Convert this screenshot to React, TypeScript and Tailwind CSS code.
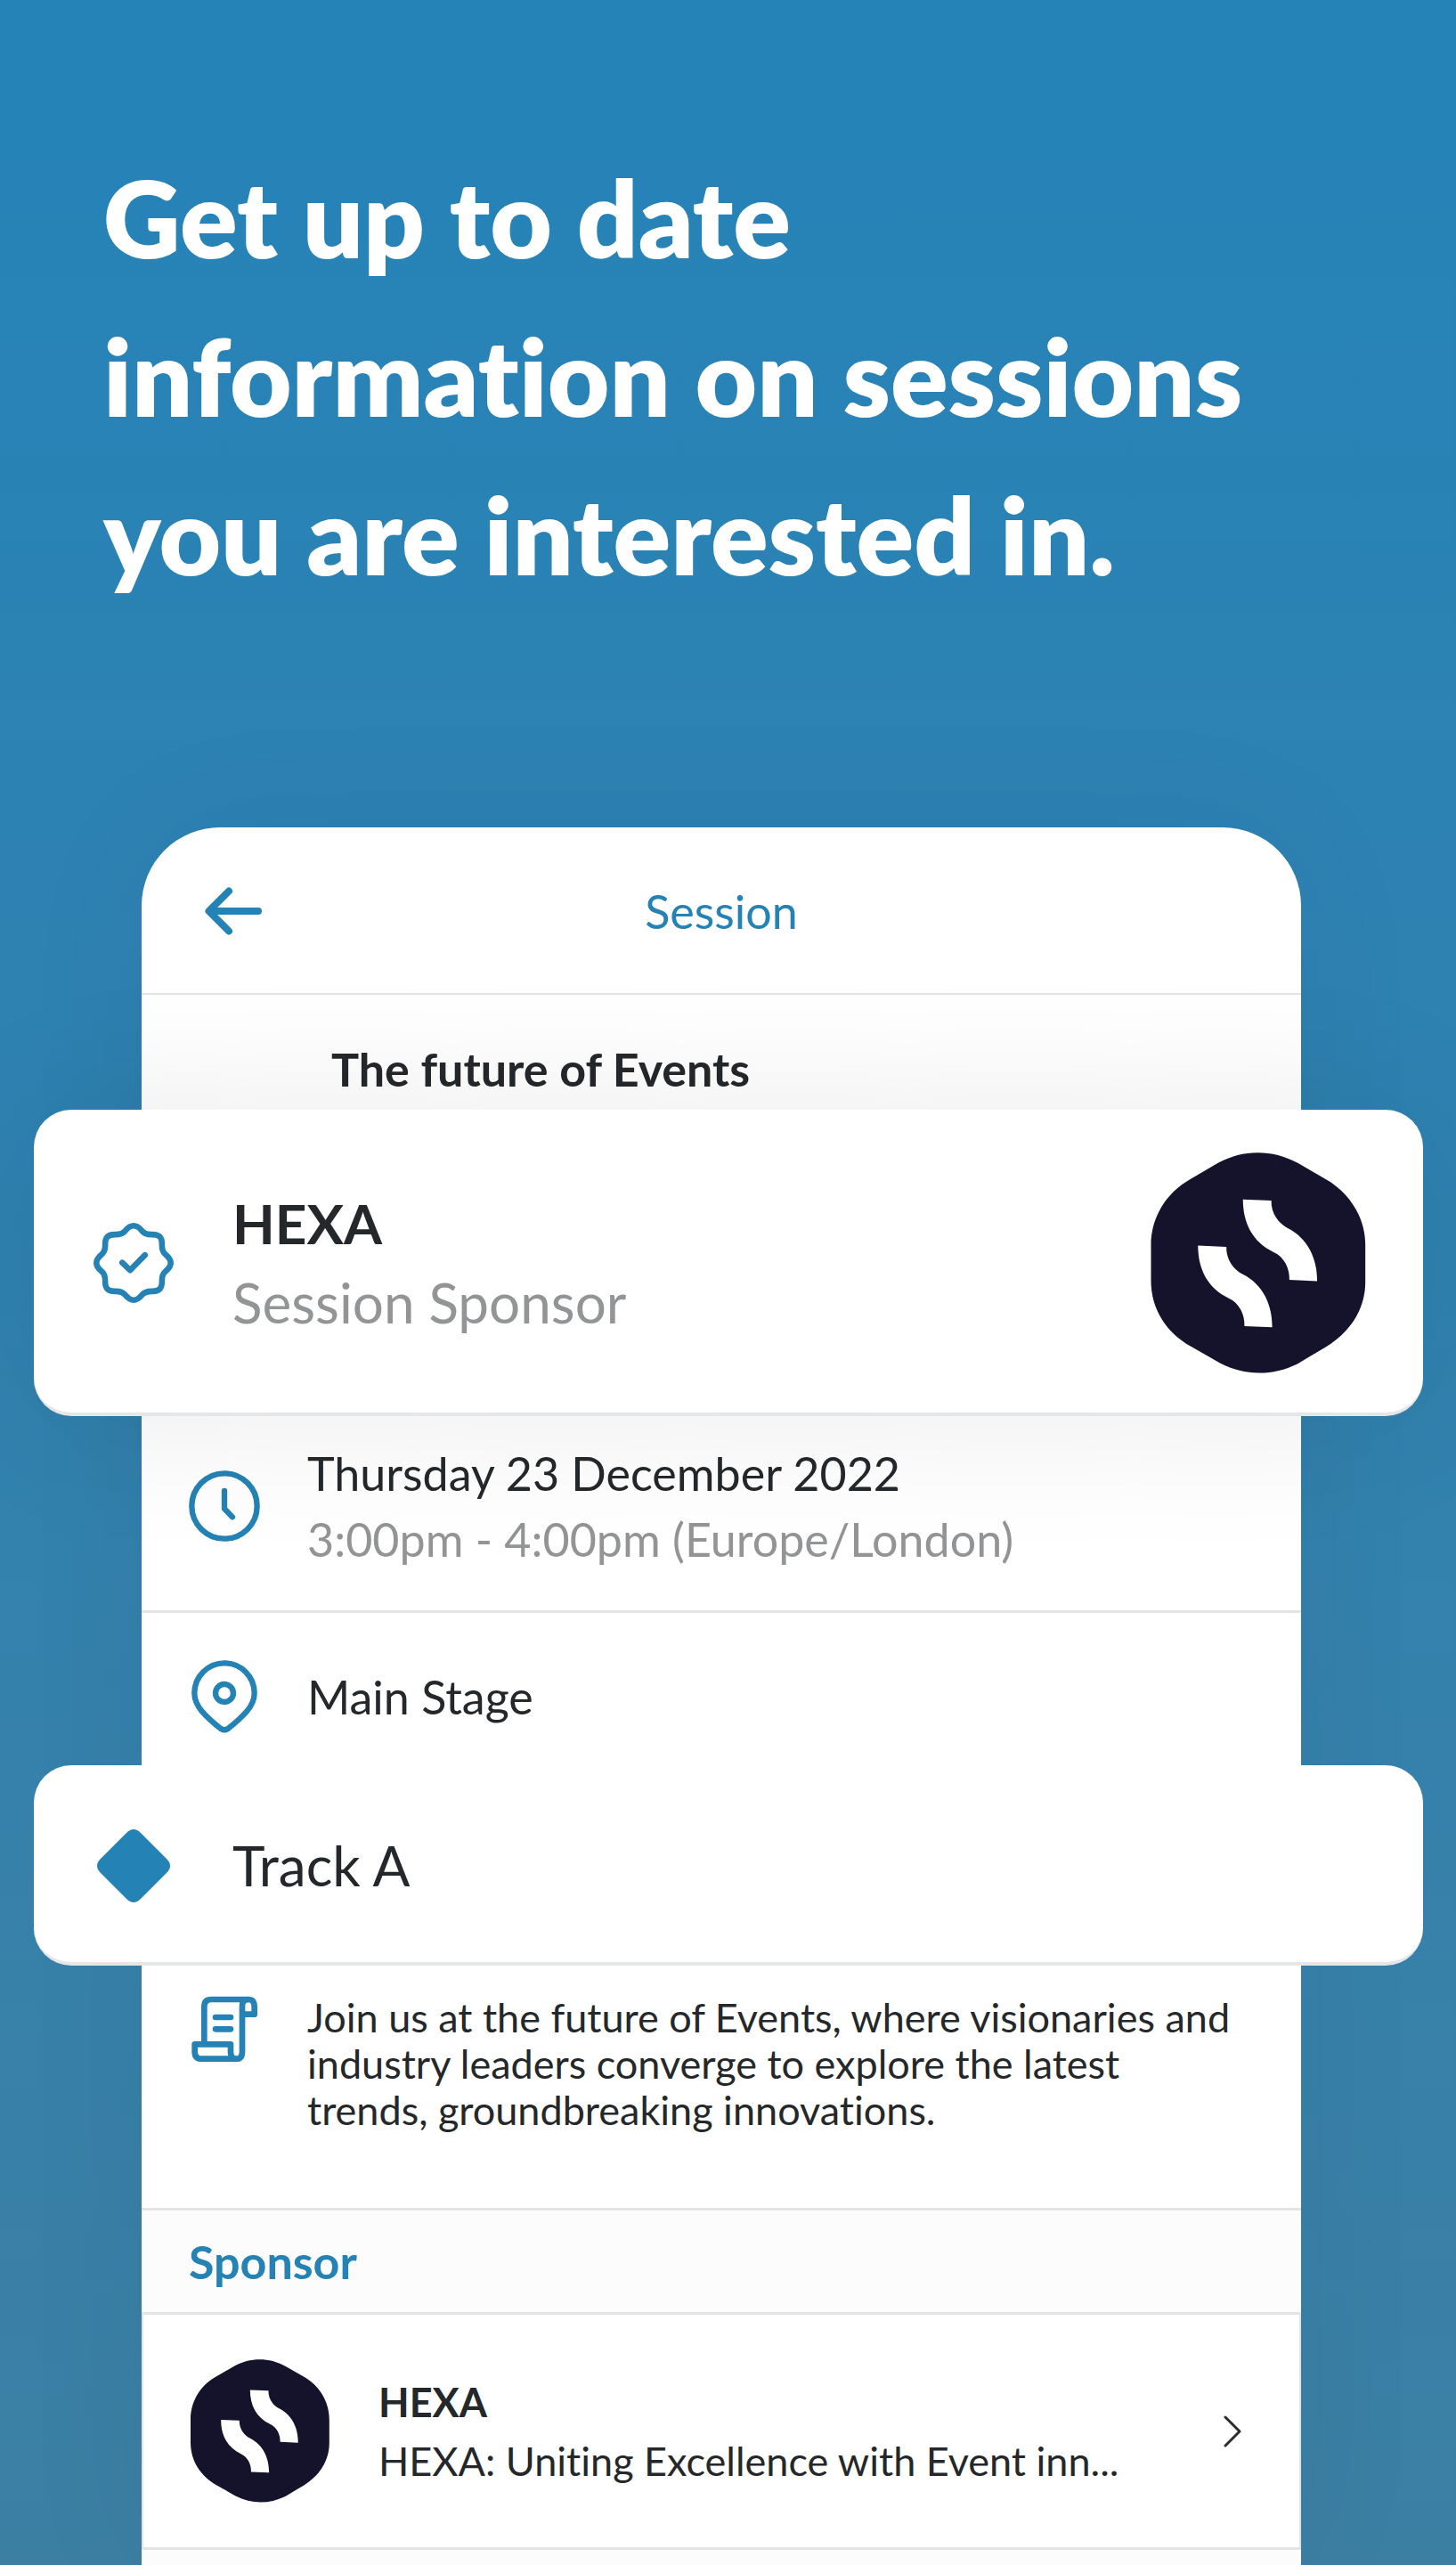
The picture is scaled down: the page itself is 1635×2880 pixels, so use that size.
import type { ReactNode } from 'react';

const BLUE = '#2482b4';

function BackIcon() {
  return (
    <svg className="h-[54px] w-16" viewBox="0 0 64 54" fill="none" stroke={BLUE} strokeWidth="8" strokeLinecap="round" strokeLinejoin="round" aria-hidden="true">
      <path d="M5 27H60M27 4.500L4.500 27L27 49.500" />
    </svg>
  );
}

function BadgeIcon() {
  return (
    <svg className="h-[90px] w-[90px] shrink-0" viewBox="-137 -137 274 274" fill="none" stroke={BLUE} strokeWidth="20" strokeLinecap="round" strokeLinejoin="round" aria-hidden="true">
      <path d="M0-127C15-127 22-117 30-108C38-99 48-97 60-97C85-98 98-90 97-62C97-48 99-38 108-30C117-22 127-15 127 0C127 15 117 22 108 30C99 38 97 48 97 60C98 85 90 98 62 97C48 97 38 99 30 108C22 117 15 127 0 127C-15 127-22 117-30 108C-38 99-48 97-60 97C-85 98-98 90-97 62C-97 48-99 38-108 30C-117 22-127 15-127 0C-127-15-117-22-108-30C-99-38-97-48-97-60C-98-85-90-98-62-97C-48-97-38-99-30-108C-22-117-15-127 0-127Z" />
      <path d="M-39-1L-12 25L39-27" />
    </svg>
  );
}

function ClockIcon() {
  return (
    <svg className="h-20 w-20 shrink-0" viewBox="36 32 240 240" fill="none" stroke={BLUE} strokeWidth="19" strokeLinecap="round" strokeLinejoin="round" aria-hidden="true">
      <circle cx="156" cy="152" r="110" />
      <path d="M156 101V161L183 189" />
    </svg>
  );
}

function PinIcon() {
  return (
    <svg className="h-[82px] w-20 shrink-0" viewBox="36 673 240 246" fill="none" stroke={BLUE} strokeWidth="19" strokeLinejoin="round" aria-hidden="true">
      <path d="M55 784A101 101 0 0 1 257 784C257 808 248 826 232 845C212 868 190 887 168 904Q156 912 144 904C122 887 100 868 80 845C64 826 55 808 55 784Z" />
      <circle cx="156" cy="784" r="30" />
    </svg>
  );
}

function ScrollIcon() {
  return (
    <svg className="h-20 w-20 shrink-0" viewBox="36 42 240 240" fill="none" stroke={BLUE} strokeWidth="20" strokeLinejoin="round" aria-hidden="true">
      <path d="M88 209V84Q88 60 112 60H236Q257 60 257 84V110H218" />
      <path d="M216 110V82Q216 60 236 60M216 80V236Q216 260 196 260Q177 260 177 236V211H56V236Q56 260 80 260H196" />
      <path d="M126 120H177M126 160H177" strokeLinecap="round" />
    </svg>
  );
}

function DiamondIcon() {
  return (
    <svg className="h-[82px] w-[90px] shrink-0" viewBox="-4 0 90 82" fill={BLUE} aria-hidden="true">
      <path d="M33 4Q41-4 49 4L78 33Q86 41 78 49L49 78Q41 86 33 78L4 49Q-4 41 4 33Z" />
    </svg>
  );
}

function HexaLogo({ className }: { className: string }) {
  return (
    <svg className={className} viewBox="157 162 726 747" role="img" aria-label="HEXA">
      <path fill="#14132b" d="M157 595V475C157 385 205 300 290 252L385 197C468 151 568 151 652 197L748 252C832 300 882 385 882 475V600C882 690 832 770 748 820L652 877C568 918 475 918 392 875L292 818C207 770 157 690 157 595Z" />
      <path fill="#fff" d="M468 321L564 325C563 370 590 402 618 417C690 452 720 525 719 597L625 593C627 555 608 515 572 499C500 465 468 400 468 321Z" />
      <path fill="#fff" d="M316 477L412 481C411 526 438 558 466 573C538 608 568 681 567 753L473 749C475 711 456 671 420 655C348 621 316 556 316 477Z" />
    </svg>
  );
}

function ChevronIcon() {
  return (
    <svg className="h-9 w-5 shrink-0" viewBox="0 0 20 36" fill="none" stroke="#2a2c2d" strokeWidth="3" strokeLinecap="round" strokeLinejoin="round" aria-hidden="true">
      <path d="M2 2L18 18L2 34" />
    </svg>
  );
}

function RaisedCard({ className, children }: { className: string; children: ReactNode }) {
  return (
    <section className={`relative -ml-[121px] -mr-[137px] flex items-center rounded-[42px] border-b-4 border-[#e5e6e7] bg-white pl-[67px] pr-16 text-[62px] leading-[89px] ${className}`}>
      {children}
    </section>
  );
}

export default function App() {
  return (
    <div className="min-h-screen overflow-hidden bg-linear-to-b from-[#2583b8] via-[#3082b0] to-[#3c7fa3] font-['Lato',sans-serif] text-[#25282a] [font-variant-ligatures:none]">
      <h1 className="pl-[116px] pr-20 pt-[155px] text-[120px] leading-[178px] font-extrabold text-white">
        Get up to date
        <br />
        information on sessions
        <br />
        you are interested in.
      </h1>

      <main className="ml-[159px] mr-[174px] mt-[240px] rounded-t-[88px] bg-white text-[52px] leading-[74px] shadow-[0_0_160px_rgba(0,0,0,0.05)]">
        <header className="grid grid-cols-[1fr_auto_1fr] items-center border-b-2 border-[#e3e4e5] px-[71px] pb-[55px] pt-[57px]">
          <button type="button" aria-label="Back" className="justify-self-start">
            <BackIcon />
          </button>
          <span className="text-[#2482b4]">Session</span>
        </header>

        <h2 className="pb-[9px] pl-[213px] pt-[46px] font-bold">The future of Events</h2>

        <RaisedCard className="justify-between pb-[79px] pt-[83px] shadow-[0_0_170px_rgba(0,0,0,0.09)]">
          <div className="flex items-center gap-[66px]">
            <BadgeIcon />
            <div>
              <p className="font-bold">HEXA</p>
              <p className="text-[#929495]">Session Sponsor</p>
            </div>
          </div>
          <HexaLogo className="h-[248px] w-[242px] shrink-0 -my-20" />
        </RaisedCard>

        <div className="flex items-center gap-[53px] border-b-[3px] border-[#e3e4e5] pb-[43px] pl-[53px] pt-[27px]">
          <ClockIcon />
          <div>
            <p>Thursday 23 December 2022</p>
            <p className="text-[#929495]">3:00pm - 4:00pm (Europe/London)</p>
          </div>
        </div>

        <div className="flex items-center gap-[53px] pb-9 pl-[53px] pt-[53px]">
          <PinIcon />
          <p>Main Stage</p>
        </div>

        <RaisedCard className="gap-[66px] pb-[64px] pt-[68px]">
          <DiamondIcon />
          <p>Track A</p>
        </RaisedCard>

        <div className="flex items-start gap-[53px] border-b-[3px] border-[#e3e4e5] pb-[84px] pl-[53px] pr-[66px] pt-8">
          <ScrollIcon />
          <p className="text-[45px] leading-[52px]">
            Join us at the future of Events, where visionaries and
            <br />
            industry leaders converge to explore the latest
            <br />
            trends, groundbreaking innovations.
          </p>
        </div>

        <h3 className="border-b-[3px] border-[#e3e4e5] bg-[#fcfcfc] px-[53px] py-5 font-bold text-[#2482b4]">Sponsor</h3>

        <a href="#hexa" className="flex items-center gap-[55px] border-x-2 border-b-[3px] border-[#e3e4e5] bg-white py-[50px] pl-[53px] pr-[65px] text-[45px] leading-[66px]">
          <HexaLogo className="h-[161px] w-[156px] shrink-0" />
          <span className="min-w-0 grow">
            <strong className="block font-bold">HEXA</strong>
            <span className="block truncate">HEXA: Uniting Excellence with Event inn...</span>
          </span>
          <ChevronIcon />
        </a>
        <div className="h-[17px] bg-[#fcfcfc]" />
      </main>
    </div>
  );
}
